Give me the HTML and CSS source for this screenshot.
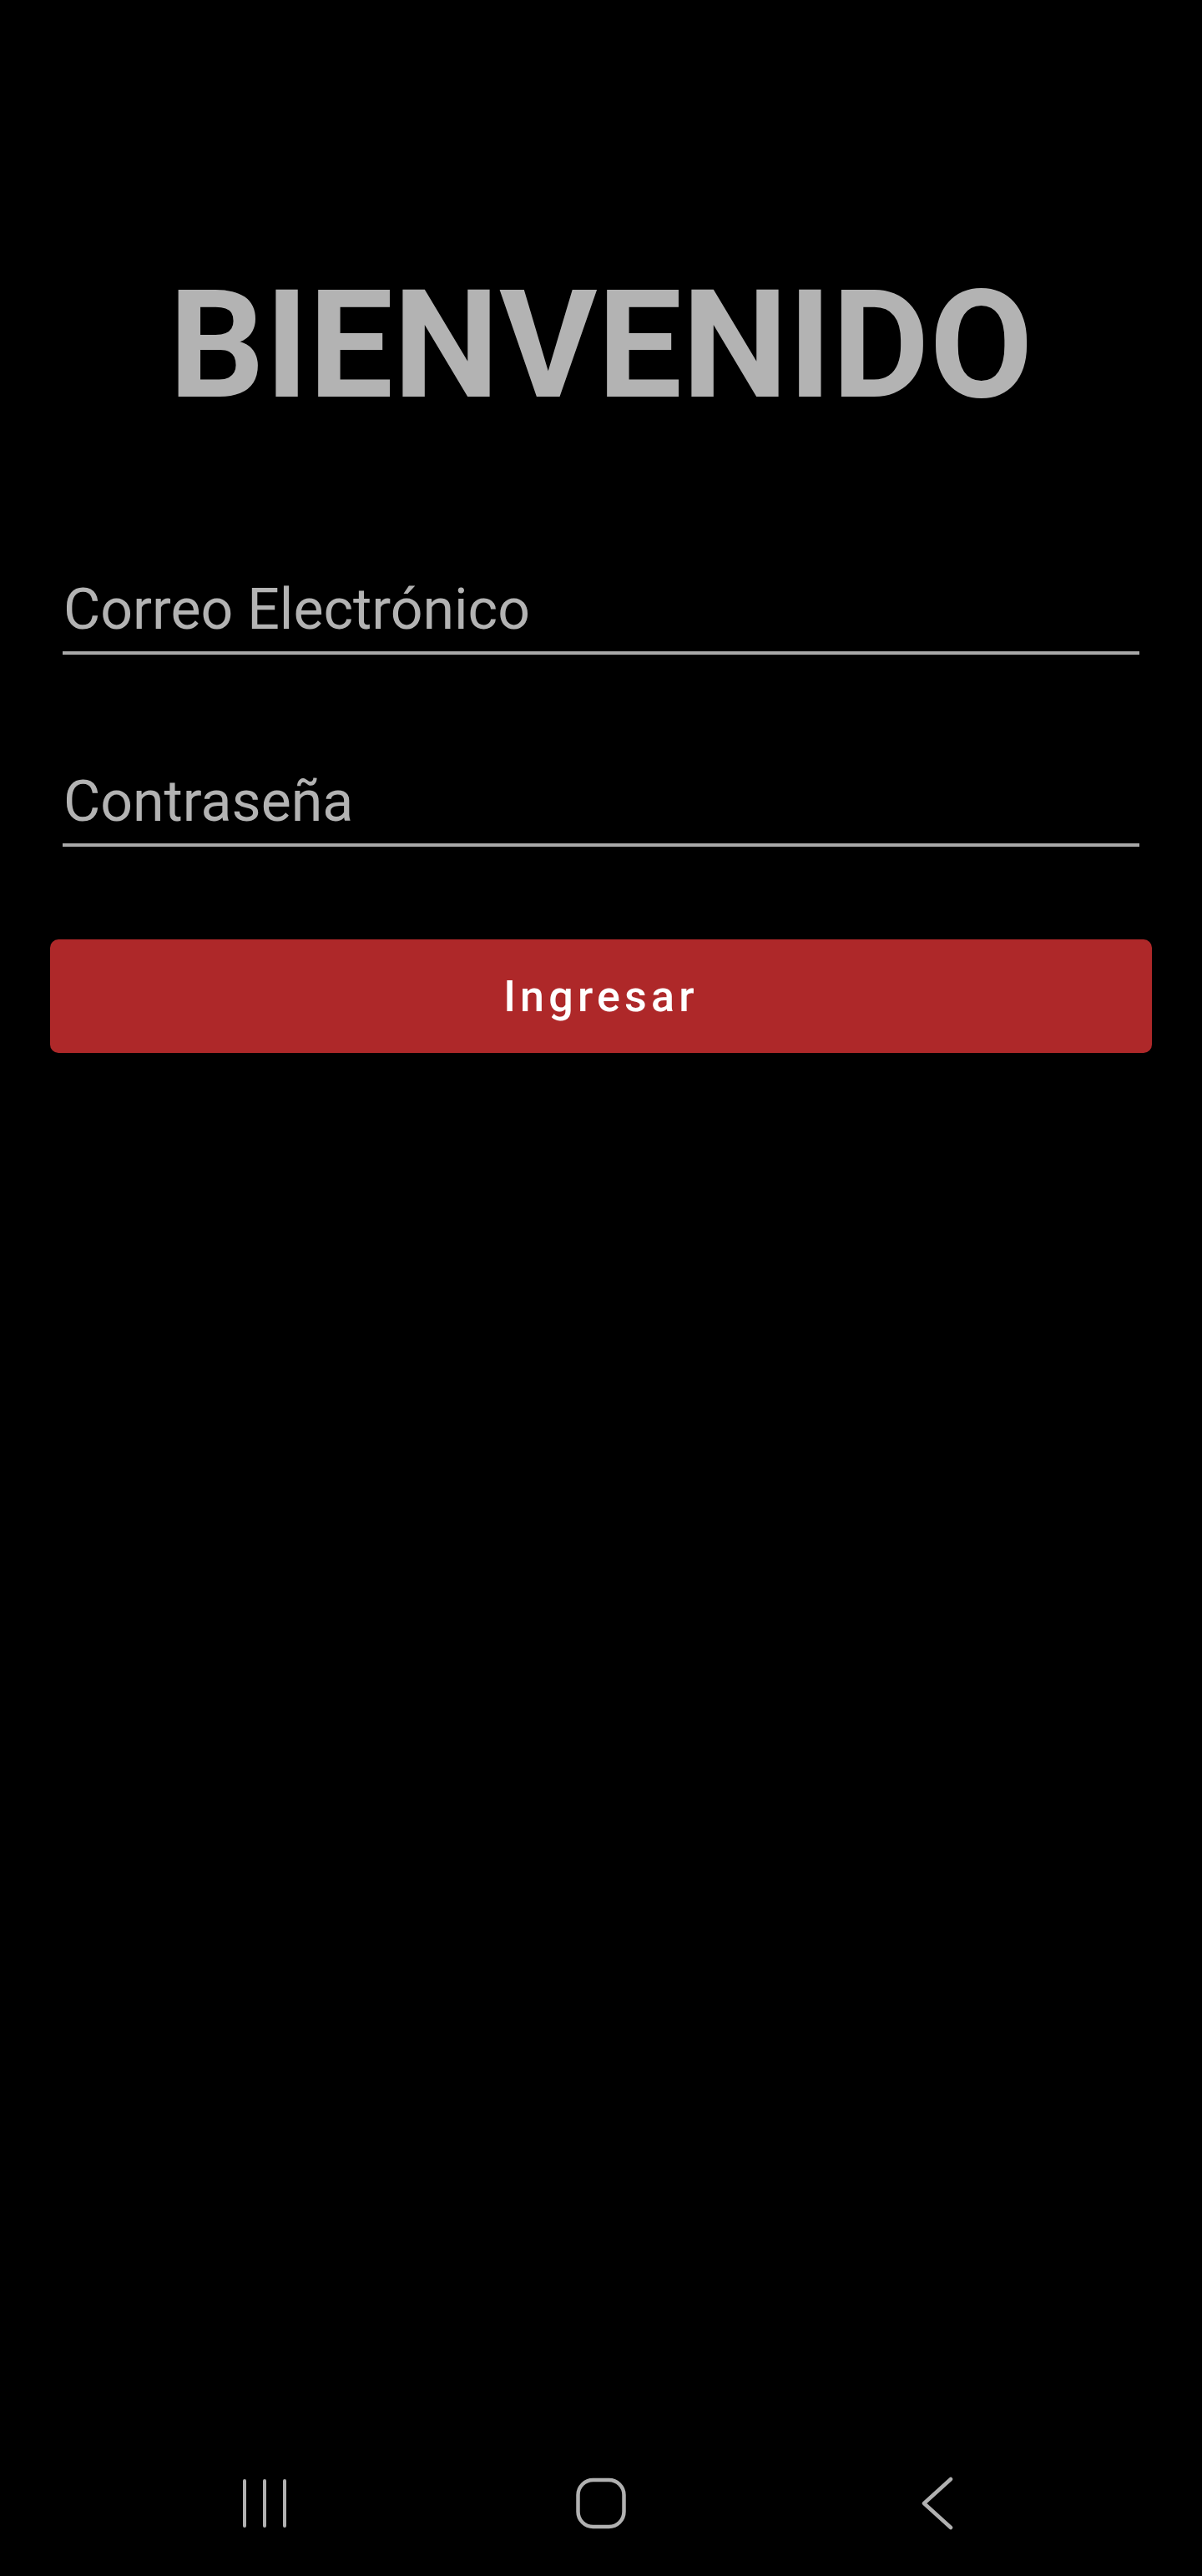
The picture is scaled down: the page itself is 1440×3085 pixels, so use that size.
FILE: index.html
```html
<!DOCTYPE html>
<html lang="es">
<head>
<meta charset="utf-8">
<title>Bienvenido</title>
<link rel="stylesheet" href="styles.css">
</head>
<body>
<div class="screen">
  <main class="login">
    <h1 class="title">BIENVENIDO</h1>
    <div class="field field-email">
      <div class="label">Correo Electrónico</div>
      <div class="underline"></div>
    </div>
    <div class="field field-pass">
      <div class="label">Contraseña</div>
      <div class="underline"></div>
    </div>
    <button class="btn">Ingresar</button>
  </main>
  <nav class="navbar">
    <div class="nav-item">
      <svg width="56" height="60" viewBox="0 0 56 60"><g stroke="#b1b1b1" stroke-width="4" stroke-linecap="round"><line x1="4" y1="3" x2="4" y2="57"/><line x1="28" y1="3" x2="28" y2="57"/><line x1="52" y1="3" x2="52" y2="57"/></g></svg>
    </div>
    <div class="nav-item">
      <svg width="62" height="62" viewBox="0 0 62 62"><rect x="3.5" y="3" width="55" height="56" rx="18" fill="none" stroke="#b1b1b1" stroke-width="4.5"/></svg>
    </div>
    <div class="nav-item">
      <svg width="40" height="64" viewBox="0 0 40 64"><polyline points="36,3 4,32 36,61" fill="none" stroke="#b1b1b1" stroke-width="4.5" stroke-linecap="round" stroke-linejoin="round"/></svg>
    </div>
  </nav>
</div>
</body>
</html>
```

FILE: styles.css
```css
html, body {
  margin: 0;
  padding: 0;
  background: #000;
}
.screen {
  width: 1440px;
  height: 3085px;
  display: flex;
  flex-direction: column;
  font-family: Roboto, "Noto Sans", sans-serif;
}
.login {
  flex: 1;
  display: flex;
  flex-direction: column;
  padding: 324px 60px 0 60px;
}
.title {
  margin: 0;
  font-size: 180px;
  line-height: 180px;
  font-weight: 700;
  color: #b3b3b3;
  text-align: center;
}
.field {
  margin: 0 15px;
  display: flex;
  flex-direction: column;
}
.field-email {
  margin-top: 186px;
}
.field-pass {
  margin-top: 136px;
}
.label {
  font-size: 68px;
  line-height: 80px;
  color: #b3b3b3;
  padding-left: 1px;
}
.underline {
  margin-top: 10px;
  height: 4px;
  background: #a9a9a9;
}
.btn {
  margin-top: 111px;
  height: 136px;
  border: none;
  border-radius: 10px;
  background: #ae2829;
  color: #fff;
  font-family: Roboto, "Noto Sans", sans-serif;
  font-size: 52px;
  font-weight: 500;
  letter-spacing: 5.2px;
  padding: 0;
}
.navbar {
  height: 150px;
  padding-bottom: 24px;
  box-sizing: border-box;
  display: flex;
  justify-content: center;
  align-items: center;
  gap: 283px;
}
.nav-item {
  width: 120px;
  display: flex;
  justify-content: center;
  align-items: center;
}
```
